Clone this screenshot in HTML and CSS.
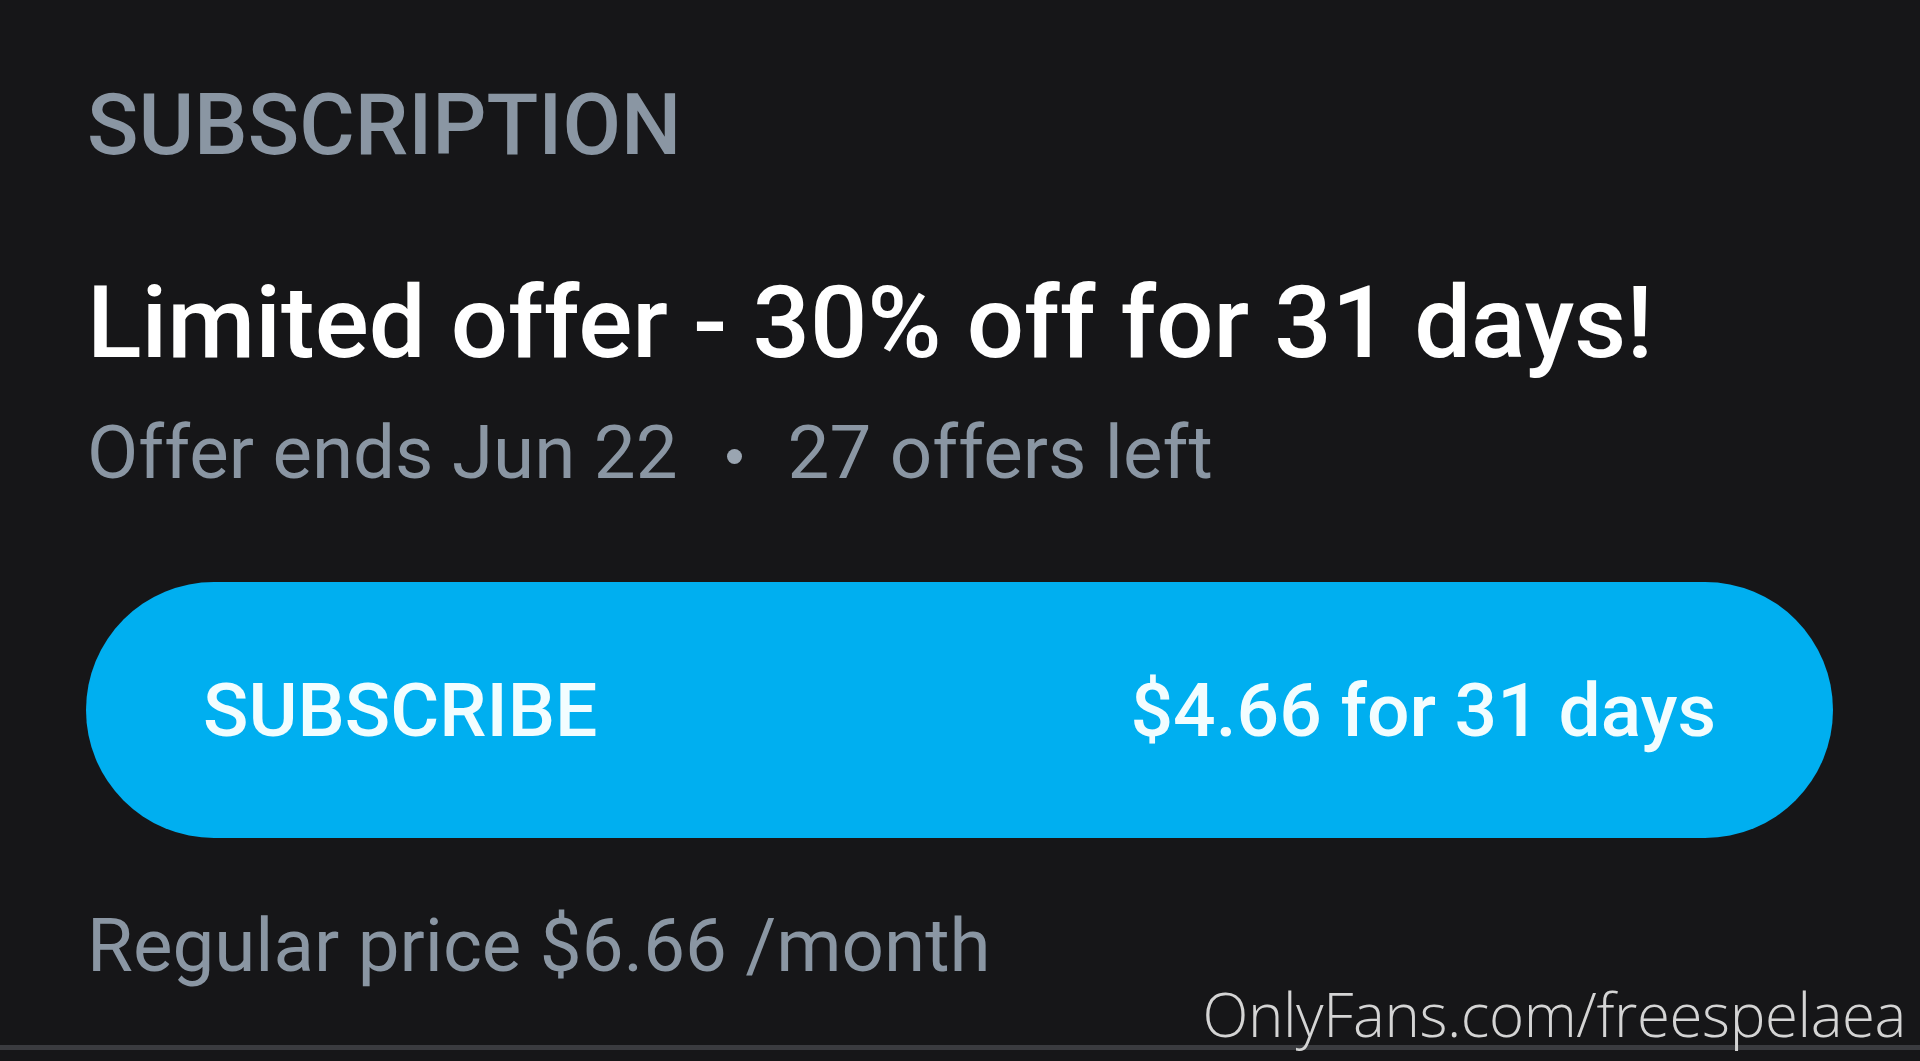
FILE: index.html
```html
<!DOCTYPE html>
<html lang="en">
<head>
<meta charset="utf-8">
<title>Subscription</title>
<link rel="stylesheet" href="styles.css">
</head>
<body>
<main class="screen">
  <section class="content">
    <h2 class="label">SUBSCRIPTION</h2>
    <h1 class="title">Limited offer - 30% off for 31 days!</h1>
    <p class="meta"><span>Offer ends Jun 22</span><span class="dot"></span><span>27 offers left</span></p>
    <button class="subscribe" type="button"><span>SUBSCRIBE</span><span>$4.66 for 31 days</span></button>
    <p class="regular">Regular price $6.66 /month</p>
  </section>
  <div class="bottom-line"></div>
  <div class="watermark">OnlyFans.com/freespelaea</div>
</main>
</body>
</html>
```
FILE: styles.css
```css
* { box-sizing: border-box; }
html, body { margin: 0; padding: 0; }
body {
  width: 1920px;
  height: 1061px;
  background: #161618;
  font-family: Roboto, "Liberation Sans", sans-serif;
  overflow: hidden;
}
.screen {
  position: relative;
  width: 1920px;
  height: 1061px;
  display: flex;
  flex-direction: column;
}
.content {
  flex: 1;
  display: flex;
  flex-direction: column;
  padding: 83px 87px 0 86px;
}
.label {
  margin: 0 0 0 1px;
  font-size: 85px;
  line-height: 85px;
  font-weight: 500;
  color: #8a96a3;
}
.title {
  margin: 104px 0 0 1px;
  font-size: 101px;
  line-height: 101px;
  font-weight: 500;
  color: #ffffff;
}
.meta {
  margin: 42px 0 0 1px;
  display: flex;
  align-items: center;
  font-size: 74.5px;
  line-height: 75px;
  font-weight: 400;
  color: #8a96a3;
}
.dot {
  width: 15px;
  height: 15px;
  border-radius: 50%;
  background: #9aa5b1;
  margin: 8px 46px 0 49px;
}
.subscribe {
  margin-top: 92px;
  height: 256px;
  width: 1747px;
  border: none;
  border-radius: 128px;
  background: #00aff0;
  color: #f2fdff;
  display: flex;
  align-items: center;
  justify-content: space-between;
  padding: 0 117px 0 117px;
  font-family: Roboto, "Liberation Sans", sans-serif;
  font-size: 75px;
  font-weight: 500;
}
.regular {
  margin: 70px 0 0 1px;
  font-size: 74.5px;
  line-height: 75px;
  color: #8a96a3;
}
.bottom-line {
  height: 5px;
  background: #3a3b3f;
  margin-bottom: 11px;
}
.watermark {
  position: absolute;
  right: 14px;
  top: 984px;
  font-family: "Open Sans", "DejaVu Sans", sans-serif;
  font-size: 60px;
  line-height: 60px;
  font-weight: 300;
  color: #d4d4d4;
  letter-spacing: -0.4px;
}
```
